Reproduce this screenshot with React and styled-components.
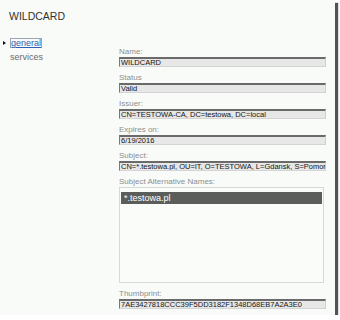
import React from "react";
import styled, { createGlobalStyle } from "styled-components";

const GlobalStyle = createGlobalStyle`
  html, body { margin: 0; padding: 0; background: #ffffff; }
  body { font-family: "Liberation Sans", Arial, sans-serif; }
  * { box-sizing: border-box; }
`;

const Window = styled.div`
  width: 335px;
  height: 315px;
  background: #f8fbf8;
  box-shadow: 3px 3px 1px rgba(40, 40, 40, 0.8);
  display: flex;
  flex-direction: column;
  overflow: hidden;
`;

const Title = styled.div`
  margin: 10px 0 0 9px;
  font-size: 10.5px;
  line-height: 13px;
  color: #333333;
`;

const Body = styled.div`
  display: flex;
  align-items: flex-start;
  margin-top: 15px;
`;

const Nav = styled.div`
  width: 119px;
  padding-left: 3px;
  display: flex;
  flex-direction: column;
  gap: 4px;
`;

const NavItem = styled.div`
  display: flex;
  align-items: center;
  height: 10px;
  gap: 4px;
  padding-left: ${(p) => (p.$active ? "0" : "7px")};
  font-size: 9px;
  line-height: 9px;
  color: #6a6a6a;
`;

const Bullet = styled.span`
  width: 0;
  height: 0;
  border-top: 2.5px solid transparent;
  border-bottom: 2.5px solid transparent;
  border-left: 3px solid #111;
`;

const ActiveLink = styled.span`
  display: inline-block;
  height: 10px;
  white-space: nowrap;
  border: 1px solid #9aa6b6;
  color: #2f5fb5;
  text-decoration: underline;
  line-height: 8px;
  padding: 0;
`;

const Panel = styled.div`
  width: 207px;
  padding-top: 8px;
  display: flex;
  flex-direction: column;
`;

const Group = styled.div`
  display: flex;
  flex-direction: column;
  margin-bottom: 5px;
`;

const Label = styled.div`
  font-size: 8px;
  line-height: 11px;
  color: #8e8e8e;
  white-space: nowrap;
`;

const Field = styled.div`
  height: 10px;
  background: #e6e7e6;
  border-top: 2px solid #6a6a6a;
  border-left: 1px solid #7a7a7a;
  border-right: 1px solid #cfcfcf;
  border-bottom: 1px solid #d4d4d4;
  padding-left: 1px;
  font-size: 7.5px;
  line-height: 7px;
  color: #151515;
  white-space: nowrap;
  overflow: hidden;
`;

const ListBox = styled.div`
  width: 205px;
  height: 96px;
  background: #f9fcf9;
  border: 1px solid #d6dad6;
  padding: 4px 1px 0 1px;
`;

const ListRow = styled.div`
  height: 12px;
  background: ${(p) => (p.$selected ? "#5b5d5b" : "transparent")};
  color: ${(p) => (p.$selected ? "#ffffff" : "#222")};
  font-size: 9px;
  line-height: 12px;
  padding-left: 3px;
`;

const fields = [
  ["Name:", "WILDCARD"],
  ["Status", "Valid"],
  ["Issuer:", "CN=TESTOWA-CA, DC=testowa, DC=local"],
  ["Expires on:", "6/19/2016"],
  ["Subject:", "CN=*.testowa.pl, OU=IT, O=TESTOWA, L=Gdansk, S=Pomorskie"],
];

export default function App() {
  return (
    <>
      <GlobalStyle />
      <Window>
        <Title>WILDCARD</Title>
        <Body>
          <Nav>
            <NavItem $active>
              <Bullet />
              <ActiveLink>general</ActiveLink>
            </NavItem>
            <NavItem>services</NavItem>
          </Nav>
          <Panel>
            {fields.map(([label, value]) => (
              <Group key={label}>
                <Label>{label}</Label>
                <Field>{value}</Field>
              </Group>
            ))}
            <Group>
              <Label>Subject Alternative Names:</Label>
              <ListBox>
                <ListRow $selected>*.testowa.pl</ListRow>
              </ListBox>
            </Group>
            <Group>
              <Label>Thumbprint:</Label>
              <Field>7AE3427818CCC39F5DD3182F1348D68EB7A2A3E0</Field>
            </Group>
          </Panel>
        </Body>
      </Window>
    </>
  );
}
